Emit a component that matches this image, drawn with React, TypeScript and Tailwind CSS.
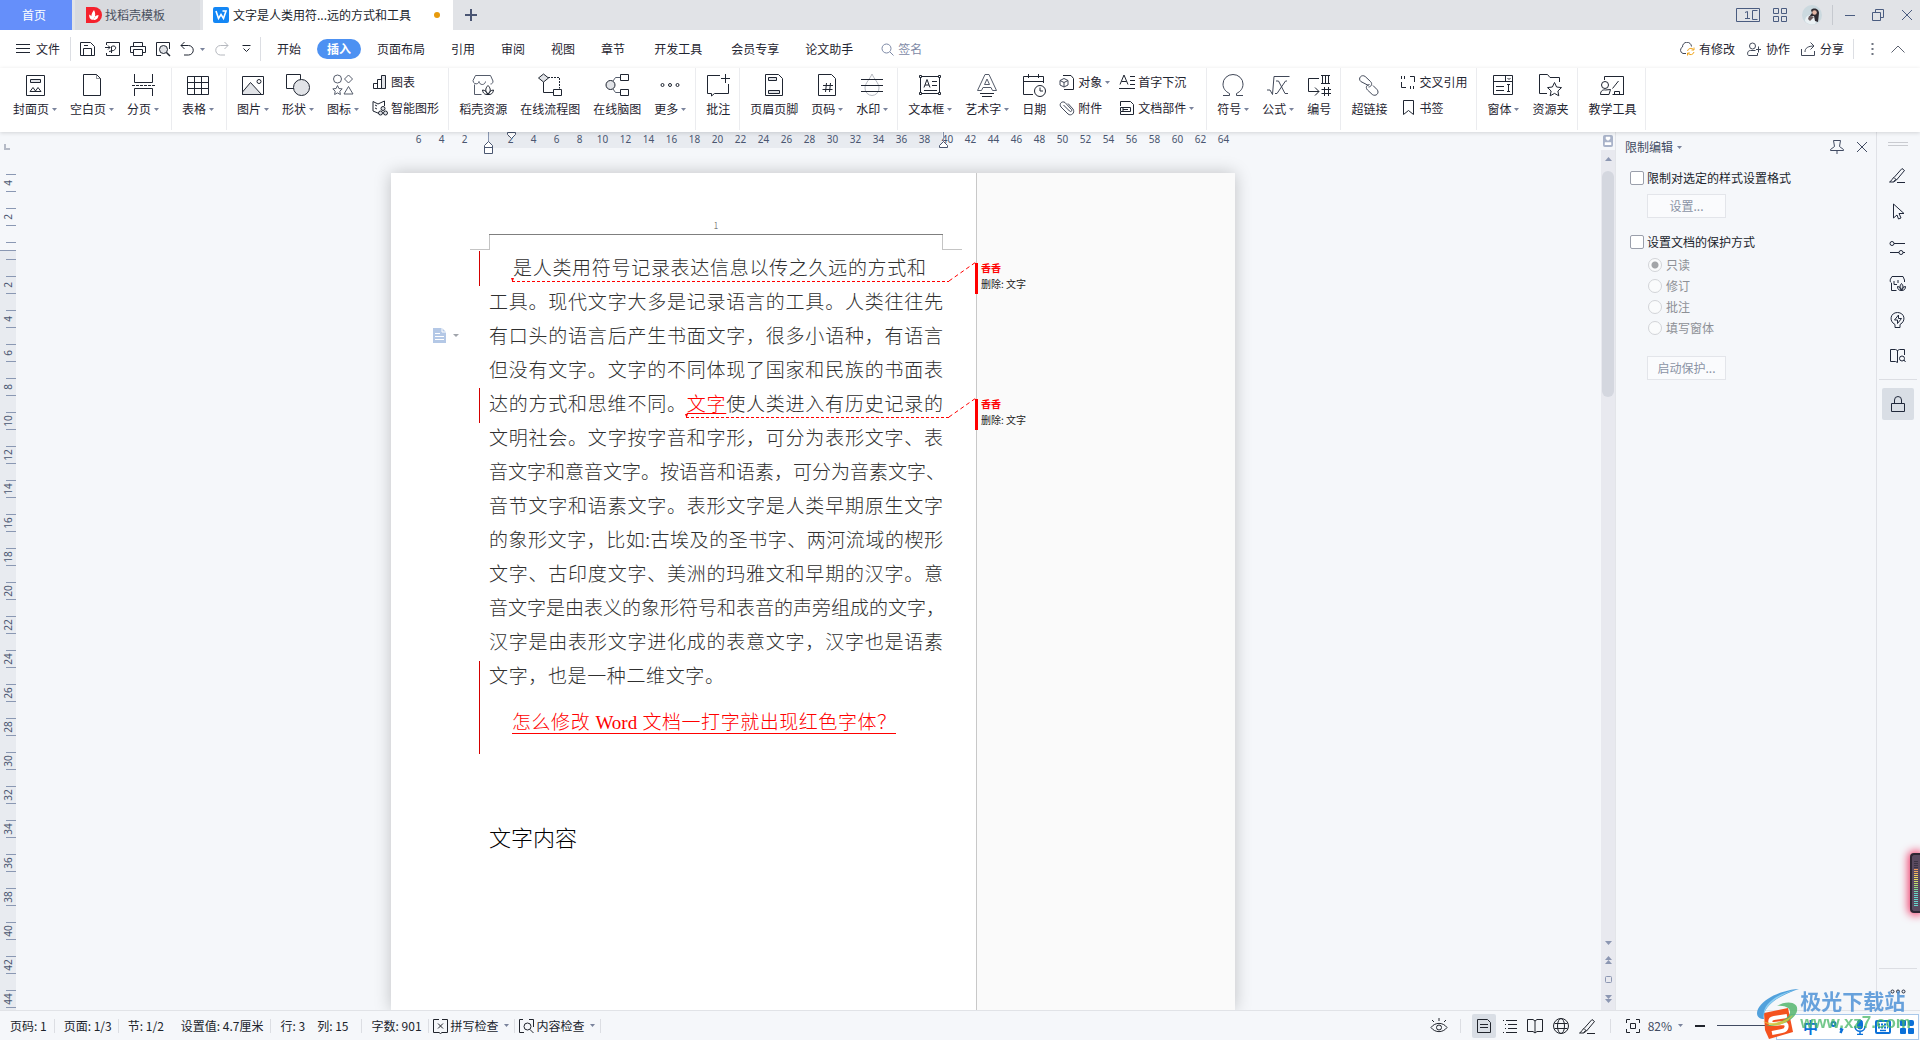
import { useState } from 'react';
import type { ReactNode } from 'react';
import clsx from 'clsx';

interface IconProps {
  w?: number;
  h?: number;
  className?: string;
  children: ReactNode;
}

function Ico({ w = 24, h = 24, className, children }: IconProps) {
  return (
    <svg
      width={w}
      height={h}
      viewBox={`0 0 ${w} ${h}`}
      fill="none"
      stroke="currentColor"
      className={clsx('shrink-0', className)}
      aria-hidden="true"
    >
      {children}
    </svg>
  );
}

function Caret({ className }: { className?: string }) {
  return (
    <svg width="5" height="3" viewBox="0 0 5 3" fill="currentColor" className={clsx('shrink-0 text-[#7a839c]', className)}>
      <path d="M0 0h5L2.5 3z" />
    </svg>
  );
}

const grey = '#e1e3e7';

/* ribbon icons, 24px */
const coverIcon = (
  <Ico>
    <path d="M3.5 2.5h18v20h-18z" />
    <path d="M7.500 6.500h10v3h-10z" fill={grey} />
    <path d="M7 18.500l3-4 2.500 3.500 2.500-3.500 3 4z" />
  </Ico>
);
const blankIcon = <Ico><path d="M3.500 1.500h13l4 4v17h-17z" /><path d="M16.500 1.500v4h4" strokeOpacity=".5" /></Ico>;
const breakIcon = (
  <Ico>
    <path d="M3.500 1v8.500h18V1M3.500 23v-7.500h18V23" />
    <path d="M1 12.500h23" strokeDasharray="3 1" />
  </Ico>
);
const tableIcon = (
  <Ico>
    <path d="M1.500 3.500h21v18h-21zM1.500 9.500h21M1.500 15.500h21M8.500 3.500v18M15.500 3.500v18" />
  </Ico>
);
const imageIcon = (
  <Ico>
    <path d="M1.500 19l8-9.500 11 12H1.500z" fill={grey} />
    <path d="M1.500 3.500h21v18h-21z" />
    <circle cx="18" cy="8.500" r="2" />
  </Ico>
);
const shapesIcon = (
  <Ico>
    <path d="M.5 1.500h14v14H.5z" />
    <circle cx="15.500" cy="14.500" r="8" fill={grey} />
  </Ico>
);
const symbolsIcon = (
  <Ico>
    <g stroke="#555c6b">
      <circle cx="6.500" cy="6" r="4" />
      <path d="M17.500 2l4 4-4 4-4-4z" />
      <path d="M6.500 12.500l1.400 3 3.300.4-2.400 2.300.6 3.300-2.900-1.600-2.900 1.600.6-3.300-2.400-2.300 3.300-.4z" />
      <path d="M17.500 13.500l4.500 7.500h-9z" />
    </g>
  </Ico>
);
const storeIcon = (
  <Ico>
    <path d="M3.500 11.500v10h7M2 7.500L4.500 2.500h15L22 8c0 2-1 3-2.500 3M2 7.500c0 4 5.500 4.500 6 1 .5 4 6 4 6.500 0" stroke="#555c6b" />
    <path d="M17 21.500c-3-3-3-6 0-9 3 3 3 6 0 9zM17 21.500c-3 .3-5-1-5.500-4.500 2.500.2 4 1.500 5.500 4.500zM17 21.500c3 .3 5-1 5.500-4.500-2.500.2-4 1.500-5.500 4.500z" />
  </Ico>
);
const flowIcon = (
  <Ico>
    <path d="M5.500 9v10.500h10" />
    <path d="M10 4.500h11.500v11" strokeDasharray="2 1" />
    <path d="M5.500 1l5 4-5 4-5-4z" fill={grey} />
    <path d="M15.500 16.500h8v6h-8z" fill="#fff" />
  </Ico>
);
const mindIcon = (
  <Ico>
    <path d="M15.500 4.500h-5L8 8M15.500 19.500h-5L8 16" stroke="#555c6b" />
    <circle cx="5.500" cy="12" r="4.500" fill={grey} />
    <path d="M15.500 1.500h8v6h-8zM15.500 16.500h8v6h-8z" />
  </Ico>
);
const moreIcon = (
  <Ico>
    <circle cx="4.500" cy="12" r="1.500" />
    <circle cx="12" cy="12" r="1.500" />
    <circle cx="19.500" cy="12" r="1.500" />
  </Ico>
);
const commentIcon = <Ico><path d="M14 2.500H1.500v18h4V23l3-2.500h14V11M19.500 1v9M15 5.500h9" /></Ico>;
const headerFooterIcon = (
  <Ico>
    <path d="M3.500 1.500h13l4 4v17h-17z" />
    <path d="M6.500 4.500h8v3h-8zM6.500 17.500h11v3h-11z" fill={grey} />
  </Ico>
);
const pageNoIcon = (
  <Ico>
    <path d="M3.500 1.500h13l4 4v17h-17z" />
    <path d="M11.500 10l-1 9M15.500 10l-1 9M8 12.500h10M7.500 16.500h10" />
  </Ico>
);
const watermarkIcon = (
  <Ico>
    <path d="M12 1C10 6 5 10 5 15a7 7.500 0 0 0 14 0c0-5-5-9-7-14z" stroke="#b4b8c0" />
    <path d="M1 6.500h22M1 12.500h22M1 18.500h22" />
  </Ico>
);
const textBoxIcon = (
  <Ico>
    <path d="M2.500 3.500h19v17h-19zM6 14.500l3-8 3 8M7 12h4M14 8.500h5M14 12.500h5M6 17.500h13" />
    <path d="M1.500 2.500h2v2h-2zM20.500 2.500h2v2h-2zM1.500 19.500h2v2h-2zM20.500 19.500h2v2h-2z" fill="#fff" />
  </Ico>
);
const wordArtIcon = (
  <Ico>
    <path d="M10 1.500h4l7.500 16h-4l-1.500-3H8l-1.500 3h-4zM12 6l-2.500 5.500h5z" stroke="#555c6b" />
    <path d="M5 20.500h14M7 23.500h10" />
  </Ico>
);
const dateIcon = (
  <Ico>
    <path d="M21.500 10V3.500h-20v18H11M1.500 8.500h20M6.500 1v4M16.500 1v4" />
    <circle cx="18" cy="18" r="5.500" fill="#fff" />
    <path d="M18 14.500v3.500h3" />
  </Ico>
);
const omegaIcon = <Ico><path d="M2 22.500h6.500v-2C4.500 18.500 2 15.500 2 11a10 9.500 0 0 1 20 0c0 4.500-2.500 7.500-6.500 9.500v2H22" stroke="#414858" /></Ico>;
const formulaIcon = <Ico><path d="M1 17h3l2.500 4.500L8 3.500h15.500M10 8h2.500l6.500 12.500H22M21 8h-1.500L11 20.500H9" stroke="#414858" /></Ico>;
const numberingIcon = (
  <Ico>
    <path d="M12 5.500H1.500v13H12M8 14.500l4 4-4 4M14 2.500h9M14 10.500h9M15.500 2.500v8M18.500 2.500v8M21.500 2.500v8M17.500 14v9M21.500 14v9M14.500 16.500H24M14.500 20.500H24" />
  </Ico>
);
const linkIcon = (
  <Ico>
    <path d="M11.500 12.500L3.800 8.500C.5 5.500 4.500.8 8.200 3.500l5.300 5c2.500 2.500.5 5.500-2 5.500M12.500 11.500c-3.500.5-4 3.500-2 5.500l4.800 4.500c3.500 2.500 7.700-1.500 4.700-5l-4-4" stroke="#414858" />
  </Ico>
);
const formIcon = (
  <Ico>
    <path d="M2.500 2.500h19v19h-19zM2.500 8.500h19M14.500 2.500v6M5 13.500h8M5 17.500h8M17.500 11.500v7M16 11.500h3M16 18.500h3M16.500 5l1.500 1.500L19.500 5" />
  </Ico>
);
const folderIcon = (
  <Ico>
    <path d="M9 20.500H1.500v-19h8l2.500 3h9.500V9" />
    <path d="M16.500 9.500l2.100 4.500 4.900.6-3.600 3.400.9 4.800-4.300-2.400-4.300 2.400.9-4.800-3.600-3.400 4.900-.6z" fill="#fff" />
  </Ico>
);
const teachIcon = (
  <Ico>
    <path d="M4.500 7V3.500h19v18h1-12M18.500 8l-6 7.500" />
    <circle cx="5" cy="12" r="3.500" />
    <path d="M.5 21.500c0-4 2.500-5 5-4.500l5-.5-1.500 5zM14.500 21v-2.500h5V21" />
  </Ico>
);

/* small ribbon icons, 16px */
const chartIcon = <Ico w={16} h={16}><path d="M1.500 9.500h4v5h-4zM5.500 5.500h4v9h-4z" /><path d="M9.500 1.500h4v13h-4z" fill={grey} /></Ico>;
const smartIcon = (
  <Ico w={16} h={16}>
    <path d="M7 13.500L1 11V1.500l5 2.500 6.500-3V6M3 5l2 1M3 8l2 1" />
    <circle cx="11" cy="8.500" r="2" fill={grey} />
    <circle cx="8.500" cy="13" r="2" fill={grey} />
    <circle cx="13.500" cy="13" r="2" fill={grey} />
  </Ico>
);
const objectIcon = (
  <Ico w={16} h={16}>
    <path d="M4 1.500h8l2.500 3v11H5" />
    <path d="M5 4.500l4 2v4.500l-4 2-4-2V6.500zM1 6.500l4 2 4-2M5 8.500V13" stroke="#414858" />
  </Ico>
);
const clipIcon = <Ico w={16} h={16}><path d="M4.500 5l6 6c1.500 1.500 3-.5 2-1.500L6 2.500C3 .5-.5 4 2 7l7 7c3 2.500 7.500-1 5-5L9 3.500" stroke="#414858" /></Ico>;
const dropCapIcon = <Ico w={16} h={16}><path d="M1 10.500L5 1l4 9.500M2.500 7.500h5M11 2.500h5M11 6.500h5M11 10.500h5M0 14.500h16" /></Ico>;
const partsIcon = <Ico w={16} h={16}><path d="M1.500 6V1.500h10l3 3v10h-13V12M1.500 7.500h10v4h-10zM4 9.500h5M4 7v5" /></Ico>;
const crossRefIcon = (
  <Ico w={16} h={16}>
    <path d="M10 2.500h4.500V8M1.500 8v5.500H6M1.500 2v3M4.500 2v3M10.500 12v3M13.500 12v3" />
  </Ico>
);
const bookmarkIcon = <Ico w={16} h={16}><path d="M3.500 0.500h10v14l-5-4-5 4z" /></Ico>;

interface RibbonEntry {
  label: string;
  icon: ReactNode;
  menu?: boolean;
}

interface RibbonGroup {
  items: RibbonEntry[];
  small?: RibbonEntry[][];
  wide?: boolean;
}

const ribbon: RibbonGroup[] = [
  {
    wide: true,
    items: [
      { label: '封面页', icon: coverIcon, menu: true },
      { label: '空白页', icon: blankIcon, menu: true },
      { label: '分页', icon: breakIcon, menu: true },
    ],
  },
  { wide: true, items: [{ label: '表格', icon: tableIcon, menu: true }] },
  {
    items: [
      { label: '图片', icon: imageIcon, menu: true },
      { label: '形状', icon: shapesIcon, menu: true },
      { label: '图标', icon: symbolsIcon, menu: true },
    ],
    small: [[{ label: '图表', icon: chartIcon }, { label: '智能图形', icon: smartIcon }]],
  },
  {
    items: [
      { label: '稻壳资源', icon: storeIcon },
      { label: '在线流程图', icon: flowIcon },
      { label: '在线脑图', icon: mindIcon },
      { label: '更多', icon: moreIcon, menu: true },
    ],
  },
  { items: [{ label: '批注', icon: commentIcon }] },
  {
    items: [
      { label: '页眉页脚', icon: headerFooterIcon },
      { label: '页码', icon: pageNoIcon, menu: true },
      { label: '水印', icon: watermarkIcon, menu: true },
    ],
  },
  {
    wide: true,
    items: [
      { label: '文本框', icon: textBoxIcon, menu: true },
      { label: '艺术字', icon: wordArtIcon, menu: true },
      { label: '日期', icon: dateIcon },
    ],
    small: [
      [{ label: '对象', icon: objectIcon, menu: true }, { label: '附件', icon: clipIcon }],
      [{ label: '首字下沉', icon: dropCapIcon }, { label: '文档部件', icon: partsIcon, menu: true }],
    ],
  },
  {
    items: [
      { label: '符号', icon: omegaIcon, menu: true },
      { label: '公式', icon: formulaIcon, menu: true },
      { label: '编号', icon: numberingIcon },
    ],
  },
  {
    items: [{ label: '超链接', icon: linkIcon }],
    small: [[{ label: '交叉引用', icon: crossRefIcon }, { label: '书签', icon: bookmarkIcon }]],
  },
  {
    items: [
      { label: '窗体', icon: formIcon, menu: true },
      { label: '资源夹', icon: folderIcon },
    ],
  },
  { items: [{ label: '教学工具', icon: teachIcon }] },
];

const menus = ['开始', '插入', '页面布局', '引用', '审阅', '视图', '章节', '开发工具', '会员专享', '论文助手'];

const lines = [
  '工具。现代文字大多是记录语言的工具。人类往往先',
  '有口头的语言后产生书面文字，很多小语种，有语言',
  '但没有文字。文字的不同体现了国家和民族的书面表',
];

const moreLines = [
  '文明社会。文字按字音和字形，可分为表形文字、表',
  '音文字和意音文字。按语音和语素，可分为音素文字、',
  '音节文字和语素文字。表形文字是人类早期原生文字',
  '的象形文字，比如:古埃及的圣书字、两河流域的楔形',
  '文字、古印度文字、美洲的玛雅文和早期的汉字。意',
  '音文字是由表义的象形符号和表音的声旁组成的文字，',
  '汉字是由表形文字进化成的表意文字，汉字也是语素',
];

function TitleBar() {
  return (
    <header className="flex h-[30px] shrink-0 bg-[#e1e3e7] text-[12px]">
      <button className="w-[72px] bg-[#658ffa] pr-1 text-white">首页</button>
      <button className="ml-[3px] flex w-[125px] items-center gap-[3px] bg-[#d8dade] pl-[11px] text-[#4a5160]">
        <svg width="16" height="16" viewBox="0 0 16 16" className="shrink-0">
          <path d="M0 0h8a8 8 0 0 1 0 16H0z" fill="#f5222d" />
          <path d="M7 13C4.500 10 5 7 8 3c2 4 1.500 7-1 10zM6.500 13C4 12.500 3 10.500 3.200 7.500 5.500 8.500 6.500 10.500 6.500 13zM7.500 13c3 0 5-2 5-5-3 .5-4.800 2-5 5z" fill="#fff" />
        </svg>
        找稻壳模板
      </button>
      <button className="ml-[3px] flex w-[250px] items-center bg-white pl-[10px] pr-[13px] text-[#20242c]">
        <svg width="16" height="16" viewBox="0 0 16 16" className="mr-1 shrink-0">
          <rect width="16" height="16" rx="2" fill="#1487f5" />
          <path d="M3 4l2.500 7.500L8 7.500l2.500 4L13 4H9.500" fill="none" stroke="#fff" strokeWidth="1.600" />
        </svg>
        文字是人类用符...远的方式和工具
        <span className="ml-auto h-[6px] w-[6px] rounded-full bg-[#e79a0c]" />
      </button>
      <button className="ml-[10px] w-4 text-[#4a5573]" aria-label="新建标签">
        <Ico w={16} h={16}><path d="M2 8h12M8 2v12" strokeWidth="2" /></Ico>
      </button>
      <div className="ml-auto flex items-center pr-2 text-[#4a5c80]">
        <button aria-label="窗口布局">
          <Ico w={24} h={16}>
            <path d="M.5 1.500h23v13H.5zM21.500 3.500h-5v9h5M18.500 12.500h2" />
            <path d="M9 5.500l2.500-1v7.500M9 11.500h5" />
          </Ico>
        </button>
        <button className="ml-[13px]" aria-label="应用">
          <Ico w={14} h={14}><path d="M.5.5h5v5h-5zM8.500.5h5v5h-5zM.5 8.500h5v5h-5zM8.500 8.500h5v5h-5z" /></Ico>
        </button>
        <svg width="20" height="20" viewBox="0 0 20 20" className="ml-[15px]">
          <circle cx="10" cy="10" r="10" fill="#cbd9df" />
          <path d="M3 16c0-4 3-6 6-6l7 3-3 6c-4 1-8 0-10-3z" fill="#eaf1f4" />
          <path d="M9 5c3-3 8-1 8 3l-1 9-3-1-1-5-5 1 3-4z" fill="#2e2a30" />
          <circle cx="12.500" cy="7.500" r="2.300" fill="#e3b7a6" />
          <path d="M7 11l5 1-4 4-2-2z" fill="#6a5a5c" />
        </svg>
        <span className="ml-[10px] h-5 w-px bg-[#c6c9cf]" />
        <button className="ml-3" aria-label="最小化"><Ico w={10} h={12}><path d="M0 6.500h10" /></Ico></button>
        <button className="ml-[17px]" aria-label="还原"><Ico w={12} h={12}><path d="M.5 3.500h8v8h-8zM3.500 3V.5h8v8H9" /></Ico></button>
        <button className="ml-[18px]" aria-label="关闭"><Ico w={10} h={10}><path d="M0 0l10 10M10 0L0 10" /></Ico></button>
      </div>
    </header>
  );
}

function MenuBar() {
  const [active, setActive] = useState('插入');
  return (
    <div className="flex h-[38px] shrink-0 items-center bg-white pl-4 pr-[15px] text-[12px] text-[#1f2531]">
      <button className="flex items-center gap-[6px]">
        <Ico w={14} h={12}><path d="M0 1.500h14M0 5.500h14M0 9.500h14" /></Ico>
        文件
      </button>
      <span className="ml-[10px] h-6 w-px bg-[#dcdee3]" />
      <div className="ml-[9px] flex items-center gap-[9px]">
        <button aria-label="保存"><Ico w={16} h={16}><path d="M.5 14.500V1.500h10l4 4v9zM3.500 14v-6.500h8V14M4 4.500h4" /></Ico></button>
        <button aria-label="输出为PDF"><Ico w={16} h={16}><path d="M1.500 4V1.500h13v13h-13V12M0 6.500h5M3 4.500l2 2-2 2M6.500 12V5.500c4-2 6 2 2 4L4 10.500" /></Ico></button>
        <button aria-label="打印"><Ico w={16} h={16}><path d="M3.500 5V1.500h9V5M3 11.500H.5v-6h15v6H13M3.500 8.500h9v6h-9z" /></Ico></button>
        <button aria-label="打印预览"><Ico w={16} h={16}><path d="M6 14.500H1.500v-13h13V8" /><circle cx="8.500" cy="8.500" r="4" fill={grey} /><path d="M11.500 11.500l3.500 3.500" strokeWidth="1.500" /></Ico></button>
        <button aria-label="撤销"><Ico w={14} h={16}><path d="M4.500 1L1 4.500 4.500 8M1 4.500h7.500a4.500 4.500 0 0 1 0 9.500H4" /></Ico></button>
        <Caret className="-ml-[3px]" />
        <button aria-label="恢复" className="ml-[1px] text-[#b5b8be]"><Ico w={14} h={16}><path d="M9.500 1L13 4.500 9.500 8M13 4.500H5.500a4.500 4.500 0 0 0 0 9.500H10" /></Ico></button>
        <button aria-label="更多命令" className="ml-[4px]"><Ico w={9} h={10}><path d="M.5 1.500h8M1.500 4.500l3 3 3-3" /></Ico></button>
      </div>
      <span className="ml-[9px] h-6 w-px bg-[#dcdee3]" />
      <nav className="ml-[3px] flex items-center">
        {menus.map((m) => (
          <button
            key={m}
            onClick={() => setActive(m)}
            className={clsx(
              'h-5 whitespace-nowrap',
              m === active ? 'mx-[3px] rounded-full bg-[#4d91f2] px-[10px] font-bold text-white' : 'px-[13px]',
              m === '开发工具' && 'mx-[3px]'
            )}
          >
            {m}
          </button>
        ))}
      </nav>
      <button className="ml-[15px] flex items-center gap-1 text-[#7d89a6]">
        <Ico w={13} h={13}><circle cx="5.500" cy="5.500" r="4.500" /><path d="M9 9l3.500 3.500" /></Ico>
        签名
      </button>
      <div className="ml-auto flex items-center">
        <button className="flex items-center gap-1">
          <Ico w={16} h={14}>
            <path d="M7 11.500H4a3.500 3.500 0 0 1-.5-6.500 4.500 4.500 0 0 1 9-.5" stroke="#414858" />
            <path d="M8.500 9a3.500 3.500 0 0 1 6-1.500M15 5.500v2.500h-2.500M15 10a3.500 3.500 0 0 1-6 1.500M8.500 13.500V11H11" stroke="#f0a51d" />
          </Ico>
          有修改
        </button>
        <button className="ml-3 flex items-center gap-[5px]">
          <Ico w={14} h={14} className="text-[#414858]"><circle cx="5.500" cy="4" r="3" /><path d="M8.500 8.500H3.500c-4 0-3 5-2 5h9V11M11.500 4.500v6M9 7.500h5" /></Ico>
          协作
        </button>
        <button className="ml-[11px] flex items-center gap-[5px]">
          <Ico w={14} h={14} className="text-[#414858]"><path d="M.5 7v6.500h13V9M4 10c0-4 3-6 9-6M9.500.5L13 4 9.500 7.500" /></Ico>
          分享
        </button>
        <span className="ml-[9px] h-5 w-px bg-[#dcdee3]" />
        <button className="ml-[17px]" aria-label="更多"><Ico w={3} h={12}><path d="M1.500 0v12" strokeWidth="2" strokeDasharray="2 3" stroke="#6f7480" /></Ico></button>
        <button className="ml-[17px]" aria-label="收起功能区"><Ico w={14} h={8}><path d="M.5 7.500L7 1l6.500 6.500" stroke="#5c6270" /></Ico></button>
      </div>
    </div>
  );
}

function Ribbon() {
  return (
    <div className="relative z-10 flex h-16 shrink-0 bg-white pb-[2px] pl-[3px] text-[12px] leading-4 text-[#1f2531] shadow-[0_1px_4px_rgba(0,0,0,0.14)]">
      {ribbon.map((group, i) => (
        <div
          key={i}
          className={clsx('flex gap-[13px] whitespace-nowrap border-r border-[#ebecef] pl-[10px] pt-[5px]', group.wide ? 'pr-3' : 'pr-[9px]')}
        >
          {group.items.map(({ label, icon, menu }) => (
            <button key={label} className="flex flex-col items-center gap-1 self-start">
              {icon}
              <span className="flex items-center gap-[3px]">
                {label}
                {menu && <Caret />}
              </span>
            </button>
          ))}
          {group.small && (
            <div className="flex gap-[9px] pt-[1px]">
              {group.small.map((col, c) => (
                <div key={c} className="flex flex-col items-start gap-[10px]">
                  {col.map(({ label, icon, menu }) => (
                    <button key={label} className="flex items-center gap-[3px]">
                      {icon}
                      {label}
                      {menu && <Caret />}
                    </button>
                  ))}
                </div>
              ))}
            </div>
          )}
        </div>
      ))}
    </div>
  );
}

function RulerCell({ value }: { value: number }) {
  return (
    <div className="flex h-[34px] shrink-0 items-center">
      <span className="flex h-full w-[6px] items-center justify-center">
        <span className="ml-[10px] -rotate-90 text-[10px] leading-none">{value}</span>
      </span>
      <span className="h-[18px] w-[10px] border-y border-[#8a98b3]" />
    </div>
  );
}

function VerticalRuler() {
  const marks = Array.from({ length: 22 }, (_, i) => (i + 1) * 2);
  return (
    <div className="flex w-4 shrink-0 flex-col overflow-hidden font-['Noto_Sans',sans-serif] text-[#4a5670]">
      <div className="h-[34px] shrink-0 pl-1 pt-3">
        <div className="h-[6px] w-[6px] border-b-2 border-l-2 border-[#b5bac6]" />
      </div>
      <RulerCell value={4} />
      <RulerCell value={2} />
      <div className="h-[17px] shrink-0 border-b border-[#8a98b3] pl-[6px] pt-2">
        <div className="h-px bg-[#8a98b3]" />
      </div>
      <div className="grow bg-[#e8ebf0]">
        <div className="h-[17px] pl-[6px] pt-2">
          <div className="h-px bg-[#8a98b3]" />
        </div>
        {marks.map((m) => (
          <RulerCell key={m} value={m} />
        ))}
      </div>
    </div>
  );
}

function HorizontalRuler() {
  const marks = Array.from({ length: 36 }, (_, i) => Math.abs(i - 3) * 2);
  return (
    <div className="relative flex h-4 shrink-0 bg-[linear-gradient(to_right,transparent_97px,#e8ebf0_97px,#e8ebf0_551px,transparent_551px)] pl-4 font-['Noto_Sans',sans-serif] text-[10px] leading-[14px] text-[#4a5670]">
      {marks.map((m, i) => (
        <span key={i} className="w-[23px] shrink-0 text-center">{m === 0 ? '' : m}</span>
      ))}
      <svg width="480" height="24" viewBox="0 0 480 24" fill="#fff" stroke="#4a5670" className="absolute left-[90px] top-0">
        <path d="M7.500 0v10M462.500 0v10" stroke="#8a98b3" />
        <path d="M3.500 21.500v-8l4-4 4 4v8zM3.500 15.500h8" />
        <path d="M26.500.5h8v2l-4 4-4-4z" />
        <path d="M458.500 15.500v-2l4-4 4 4v2z" />
      </svg>
    </div>
  );
}

function Justified({ children, className }: { children: ReactNode; className?: string }) {
  return <span className={clsx('block h-[34px] whitespace-nowrap text-justify [text-align-last:justify]', className)}>{children}</span>;
}

function Balloon() {
  return (
    <div className="-ml-[2px] h-[31px] border-l-[3px] border-[#f00] pl-[3px] text-[10px] leading-[10px]">
      <p className="font-bold text-[#f00]">香香</p>
      <p className="mt-[6px] text-[#222]">删除: 文字</p>
    </div>
  );
}

function Page() {
  return (
    <div className="relative mt-[25px] flex grow bg-white shadow-[0_0_16px_rgba(0,0,0,0.22)]">
      <article className="w-[585px] pl-[98px] pr-[33px] text-[19px] font-light leading-[34px] text-[#303030]">
        <div className="flex h-[62px] items-end justify-center border-b border-[#7f7f7f] pb-[1px] text-[9px] leading-[14px] text-[#555]">1</div>
        <div className="-mx-[19px] grid h-[15px] grid-cols-[19px_1fr_19px]">
          <span className="border-b border-[#c4c4c4]" />
          <span className="border-x border-[#c4c4c4]" />
          <span className="border-b border-[#c4c4c4]" />
        </div>
        <p>
          <Justified className="pl-[24px] pr-[17px]">是人类用符号记录表达信息以传之久远的方式和</Justified>
          {lines.map((l) => <Justified key={l}>{l}</Justified>)}
          <Justified>
            达的方式和思维不同。<ins className="text-[#f00] underline underline-offset-2">文字</ins>使人类进入有历史记录的
          </Justified>
          {moreLines.map((l) => <Justified key={l}>{l}</Justified>)}
          <Justified className="w-[235px]">文字，也是一种二维文字。</Justified>
        </p>
        <p className="mt-[14px] flex h-[34px] items-center pl-[23px]">
          <ins className="block w-[384px] whitespace-nowrap border-b border-[#f00] font-['Liberation_Serif','Noto_Sans_CJK_SC',serif] leading-5 text-[#f00] no-underline [text-align-last:justify]">
            怎么修改 Word 文档一打字就出现红色字体？
          </ins>
        </p>
        <p className="mt-[79px] text-[22px] text-black">文字内容</p>
      </article>
      <aside className="flex grow flex-col gap-[105px] border-l border-[#c8c8c8] bg-[#fafafa] pt-[90px]">
        <Balloon />
        <Balloon />
      </aside>
      {/* change bars and balloon connectors */}
      <svg width="600" height="600" viewBox="0 0 600 600" fill="none" stroke="#f00" className="pointer-events-none absolute left-0 top-0">
        <path d="M88.500 78v35M88.500 215v35M88.500 488v93" stroke="#d40000" />
        <path d="M121 108.500h437M295 244.500h263" strokeDasharray="3 2" />
        <path d="M558 108l27-19M558 244l27-19" strokeDasharray="4 3" />
        <path d="M120 105h3l-1.500 4zM294 241h3l-1.500 4z" fill="#f00" stroke="none" />
        <g stroke="none">
          <path d="M42 155h9l4 4v11H42z" fill="#b4c8e6" />
          <path d="M51 155v4h4M44 160.500h5M44 163.500h9M44 166.500h9" stroke="#fff" />
          <path d="M62 161h6l-3 3z" fill="#a0a4ab" />
        </g>
      </svg>
    </div>
  );
}

function ScrollBar() {
  return (
    <div className="flex w-[14px] shrink-0 flex-col items-center bg-[#e8e9ef] text-[#8c97b2]">
      <div className="flex h-[18px] w-full items-center justify-center bg-[#f5f7fa]">
        <Ico w={10} h={12}><rect x=".5" y=".5" width="9" height="11" rx="1" fill="#a9b3c9" stroke="#a9b3c9" /><path d="M3 2h4v2L5 5.500 3 4zM2 10V7.500h6V10M4 8v2M6 8v2" fill="#fff" stroke="#fff" strokeWidth=".5" /></Ico>
      </div>
      <Ico w={7} h={4} className="mt-[7px]"><path d="M0 4h7L3.500 0z" fill="currentColor" stroke="none" /></Ico>
      <div className="mt-[10px] h-[226px] w-3 rounded-full bg-[#d4d7df]" />
      <div className="mb-[7px] mt-auto flex flex-col items-center">
        <Ico w={7} h={4}><path d="M0 0h7L3.500 4z" fill="currentColor" stroke="none" /></Ico>
        <Ico w={7} h={8} className="mt-[11px]"><path d="M0 4h7L3.500 0zM0 8h7L3.500 4z" fill="currentColor" stroke="none" /></Ico>
        <Ico w={7} h={7} className="mt-[12px]"><rect x=".5" y=".5" width="6" height="6" rx="1" /></Ico>
        <Ico w={7} h={8} className="mt-[12px]"><path d="M0 0h7L3.500 4zM0 4h7L3.500 8z" fill="currentColor" stroke="none" /></Ico>
      </div>
    </div>
  );
}

function RestrictPanel() {
  const box = 'h-[14px] w-[14px] shrink-0 appearance-none rounded-[2px] border border-[#9a9fab] bg-white';
  const button = 'h-6 w-[79px] border border-[#e3e5ea] bg-[#fafbfd] text-[#8b93a5]';
  return (
    <section className="w-[261px] shrink-0 border-l border-[#e3e5e9] text-[12px] leading-4 text-[#20242c]">
      <div className="flex h-[30px] items-center pl-[9px] pr-[9px] text-[#414b62]">
        <h2>限制编辑</h2>
        <Caret className="ml-1" />
        <button className="ml-auto" aria-label="固定"><Ico w={14} h={14}><path d="M3.500.5h7l-1 6 4 3v1H.5v-1l4-3-1-6M7 10.500V14" /></Ico></button>
        <button className="ml-[13px]" aria-label="关闭面板"><Ico w={10} h={10}><path d="M0 0l10 10M10 0L0 10" /></Ico></button>
      </div>
      <label className="ml-[14px] mt-2 flex items-center gap-[3px]">
        <input type="checkbox" className={box} />
        限制对选定的样式设置格式
      </label>
      <button className={clsx('ml-[31px] mt-2 block', button)}>设置...</button>
      <label className="ml-[14px] mt-4 flex items-center gap-[3px]">
        <input type="checkbox" className={box} />
        设置文档的保护方式
      </label>
      <div className="ml-[32px] mt-[7px] flex flex-col gap-[5px] text-[#8d9096]">
        {['只读', '修订', '批注', '填写窗体'].map((opt) => (
          <label key={opt} className="flex items-center gap-1">
            <input
              type="radio"
              name="protect"
              defaultChecked={opt === '只读'}
              disabled
              className="h-[14px] w-[14px] appearance-none rounded-full border border-[#d2d4d8] bg-[#fafbfc] checked:bg-[radial-gradient(circle,#a3a5a8_3px,#fafbfc_4px)]"
            />
            {opt}
          </label>
        ))}
      </div>
      <button className={clsx('ml-[31px] mt-5 block', button)}>启动保护...</button>
    </section>
  );
}

const penPath = 'M5 10.500L13 1.500l2.500 2L7.500 13zM5 10.500c-2 .5-1.500 3-4.500 4.500h4l3-2M8 15.500h8M4.500 15l2-2.500';

const railTools = [
  { label: '样式和格式', icon: <path d={penPath} /> },
  { label: '选择', icon: <path d="M4.500 1v14l3.500-3 1.500 4 2.500-1-2-4.500h5z" /> },
  { label: '属性', icon: <><circle cx="3" cy="4.500" r="2" /><path d="M5 4.500h11M1 13.500h9M14 13.500h2" /><circle cx="12" cy="13.500" r="2" /></> },
  { label: '稻壳', icon: <><path d="M2.500 8v7.500h5M2 7.500C1 7 1 5 1.500 4L3 1.500h11L15.500 5v2M5 6v3.500h3M9 5v3" /><path d="M12.500 15.500c-2-2-2-5 0-7 2 2 2 5 0 7zM12.500 15.500c-2.500 0-4-1-4-4 2 0 3.500 1.500 4 4zM12.500 15.500c2.500 0 4-1 4-4-2 0-3.500 1.500-4 4z" fill={grey} /></> },
  { label: '灵感', icon: <><path d="M6 13.500C-.5 10 1.500 1.500 8.500 1.500s9 8.500 2.500 12v3H6z" /><path d="M9.500 4l-4 5h3v3.500l4-5h-3z" /></> },
  { label: '阅读', icon: <><path d="M8.500 15.500V3.500l-2-1h-5v12h5zM8.500 3.500l2-1h5V8" /><circle cx="13" cy="11.500" r="2.500" /><path d="M15 13l1.500 2" /></> },
];

function Rail() {
  return (
    <aside className="flex w-[44px] shrink-0 flex-col items-center border-l border-[#e0e2e7] pr-[2px] text-[#20283a]">
      <div className="mt-[10px] h-[4px] w-5 shrink-0 border-y border-[#c9cbd0]" />
      <div className="mt-[21px] flex flex-col gap-[18px]">
        {railTools.map((t) => (
          <button key={t.label} aria-label={t.label} className="h-[18px]">
            <Ico w={18} h={18}>{t.icon}</Ico>
          </button>
        ))}
      </div>
      <div className="mt-[14px] h-px w-[38px] bg-[#dcdee3]" />
      <button aria-label="限制编辑" className="mt-2 flex h-8 w-8 items-center justify-center rounded-[2px] bg-[#d9dee5]">
        <Ico w={18} h={18}><path d="M2.500 8.500h13v8h-13zM5.500 8V5a3.500 3.500 0 0 1 7 0v3" /></Ico>
      </button>
      <div className="mb-4 mt-auto flex flex-col items-center">
        <div className="h-px w-[38px] bg-[#dcdee3]" />
        <button aria-label="更多工具" className="mt-[20px]">
          <Ico w={16} h={5}><circle cx="2.500" cy="2.500" r="1.500" /><circle cx="8" cy="2.500" r="1.500" /><circle cx="13.500" cy="2.500" r="1.500" /></Ico>
        </button>
      </div>
    </aside>
  );
}

function Sep({ className }: { className?: string }) {
  return <span className={clsx('h-[14px] w-px shrink-0 bg-[#dcdee3]', className)} />;
}

function StatusBar() {
  return (
    <footer className="flex h-[30px] shrink-0 items-center whitespace-nowrap border-t border-[#e1e3e7] bg-[#f5f7fa] pl-[10px] text-[12px] text-[#20242c]">
      <span>页码: 1</span>
      <Sep className="ml-[7px] mr-[9px]" />
      <span>页面: 1/3</span>
      <Sep className="ml-[6px] mr-[9px]" />
      <span>节: 1/2</span>
      <span className="ml-[17px]">设置值: 4.7厘米</span>
      <Sep className="ml-[6px] mr-[10px]" />
      <span>行: 3</span>
      <span className="ml-[12px]">列: 15</span>
      <Sep className="ml-[12px] mr-[10px]" />
      <span>字数: 901</span>
      <Sep className="ml-[6px] mr-1" />
      <button className="flex items-center gap-[3px]">
        <Ico w={15} h={16}><path d="M6 1.500H.5v13H6l1.500 1 1.500-1h5.500v-13H9M5 5.500l5 5M10 5.500l-5 5" /></Ico>
        拼写检查
        <Caret className="ml-[2px]" />
      </button>
      <Sep className="ml-[5px] mr-1" />
      <button className="flex items-center gap-[3px]">
        <Ico w={15} h={16}><path d="M4 1.500H.5v13H5M10 1.500h4.500V9" /><circle cx="8.500" cy="8.500" r="3.500" /><path d="M11 11.500l3.500 3.500" /></Ico>
        内容检查
        <Caret className="ml-[2px]" />
      </button>
      <Sep className="ml-[5px]" />
      <div className="ml-auto flex items-center pr-[122px]">
        <button aria-label="护眼模式"><Ico w={18} h={18}><path d="M1 10.500c4-5.500 12-5.500 16 0-4 5.500-12 5.500-16 0zM9 4V1M4 5L2 3M14 5l2-2" /><circle cx="9" cy="10.500" r="2.500" /></Ico></button>
        <Sep className="ml-3 mr-[11px]" />
        <button aria-label="页面视图" className="flex h-6 w-6 items-center justify-center rounded-[2px] bg-[#d9dee5]">
          <Ico w={16} h={16}><path d="M1.500 1.500h10l3 3v10h-13zM4 6.500h8M4 9.500h8" /></Ico>
        </button>
        <button aria-label="大纲" className="ml-[6px]"><Ico w={16} h={16}><path d="M1 2.500h1M4 2.500h11M3 6.500h1M6 6.500h9M3 10.500h1M6 10.500h9M1 14.500h1M4 14.500h11" /></Ico></button>
        <button aria-label="阅读版式" className="ml-[9px]"><Ico w={16} h={16}><path d="M8 15V3M6 1.500H.5v12h5.500l2 1.500 2-1.500h5.500v-12H10L8 3 6 1.500" /></Ico></button>
        <button aria-label="Web版式" className="ml-[10px]"><Ico w={16} h={16}><circle cx="8" cy="8" r="7.500" /><ellipse cx="8" cy="8" rx="3.500" ry="7.500" /><path d="M1.500 5.500h13M1.500 10.500h13" /></Ico></button>
        <button aria-label="写作模式" className="ml-[10px]"><Ico w={17} h={16}><path d={penPath} /></Ico></button>
        <Sep className="ml-[14px] mr-[15px]" />
        <button aria-label="适应窗口"><Ico w={14} h={14}><path d="M.5 4V.5H4M10 .5h3.500V4M13.500 10v3.500H10M4 13.500H.5V10M4.500 4.500h5v5h-5z" /></Ico></button>
        <button className="ml-2 flex items-center gap-[6px] text-[#414b62]">82%<Caret /></button>
        <button aria-label="缩小" className="ml-[12px] h-[2px] w-[10px] bg-[#20242c]" />
        <input type="range" aria-label="显示比例" defaultValue={50} className="ml-3 h-px w-[81px] appearance-none bg-[#414b62] [&::-webkit-slider-thumb]:h-0 [&::-webkit-slider-thumb]:w-0 [&::-webkit-slider-thumb]:appearance-none" />
      </div>
    </footer>
  );
}

const meter = [
  'bg-[#3c3444]', 'bg-[#3c3444]', 'bg-[#3c3444]', 'bg-[#3c3444]', 'bg-[#f09a5c]', 'bg-[#f0a95c]', 'bg-[#f0bb5c]',
  'bg-[#f0cf5c]', 'bg-[#e8dc60]', 'bg-[#e8dc60]', 'bg-[#d2e066]', 'bg-[#bfe06c]', 'bg-[#a8e074]', 'bg-[#94de80]',
  'bg-[#80dc94]', 'bg-[#72dcae]', 'bg-[#66d8c4]', 'bg-[#66d8cc]', 'bg-[#66d8cc]', 'bg-[#66d8cc]', 'bg-[#66d8cc]',
  'bg-[#66d8cc]', 'bg-[#66d8cc]',
];

function Overlays() {
  return (
    <>
      <div className="fixed right-0 top-[853px] z-20 flex h-[60px] w-[10px] flex-col items-end justify-center gap-px rounded-l-[4px] border-2 border-r-0 border-[#2e2633] bg-[#5a4a60] pr-[2px] shadow-[0_0_8px_2px_#f2406d]">
        {meter.map((c, i) => (
          <span key={i} className={clsx('h-[1px] w-1', c)} />
        ))}
      </div>

      {/* input method bar */}
      <div className="fixed bottom-0 right-[1px] z-20 flex h-[26px] items-center gap-[9px] border border-[#a9c8ea] bg-white pl-[26px] pr-1 text-[#0b70d8]">
        <span className="w-[17px] text-[15px] font-bold leading-5">中</span>
        <Ico w={16} h={16}><circle cx="4.500" cy="5" r="2" strokeWidth="2" /><path d="M11 9.500l2 1-1.500 3.500" strokeWidth="2.500" /></Ico>
        <Ico w={12} h={16}><rect x="3.500" y="1" width="5" height="9" rx="2.500" fill="currentColor" /><path d="M1 7c0 7 10 7 10 0M6 12v3M3 15.500h6" strokeWidth="1.500" /></Ico>
        <Ico w={16} h={14}><rect x="1" y="1" width="14" height="12" rx="1" strokeWidth="2" /><path d="M3 4.500h10M3 7.500h10" strokeDasharray="2 1" strokeWidth="2" /><path d="M5 10.500h6" strokeWidth="1.500" /></Ico>
        <Ico w={14} h={14}><g fill="currentColor" stroke="none"><rect width="6" height="6" rx="1" /><rect x="8" width="6" height="6" rx="2" /><rect y="8" width="6" height="6" rx="1" /><rect x="8" y="8" width="6" height="6" rx="1" /></g></Ico>
      </div>

      {/* site mark */}
      <div className="pointer-events-none fixed bottom-0 right-[9px] z-30 flex h-[52px] items-start gap-[1px]">
        <svg width="42" height="52" viewBox="0 0 42 52">
          <path d="M7 25l24-5 5 24-24 7-4-9z" fill="#f4511e" />
          <path d="M30 28l-13 2c-5 1-5 6 0 6l9-1c5 0 5 7-1 8l-10 2" fill="none" stroke="#fff" strokeWidth="4" />
          <path d="M42 1C21 2 1 14 0 25c0 4 3 6 7 6C5 21 17 9 42 1z" fill="#3f97d8" fillOpacity=".9" />
          <path d="M37 2C21 8 7 18 7 28 5 18 17 7 37 2z" fill="#8fd0f2" />
          <path d="M20 18c10-6 22-4 20 5-2 8-14 16-32 15 14-2 24-8 25-13 1-5-5-8-13-7z" fill="#54b56d" fillOpacity=".85" />
          <path d="M6 33c8 4 20 2 30-6-6 9-20 15-30 6z" fill="#e2c83a" fillOpacity=".8" />
        </svg>
        <div className="font-bold">
          <p className="text-[21px] leading-[25px] text-[#4d92d6]/85">极光下载站</p>
          <p className="font-['Liberation_Sans',sans-serif] text-[17px] leading-[19px] text-[#46b565]/75">www.xz7.com</p>
        </div>
      </div>
    </>
  );
}

export default function App() {
  return (
    <div className="flex h-screen min-w-[1680px] flex-col overflow-hidden bg-[#f5f7fa] font-['Noto_Sans_CJK_SC',sans-serif]">
      <TitleBar />
      <MenuBar />
      <Ribbon />
      <main className="flex min-h-0 grow">
        <VerticalRuler />
        <div className="flex min-w-0 grow justify-center overflow-hidden pl-[9px]">
          <div className="flex w-[844px] shrink-0 flex-col">
            <HorizontalRuler />
            <Page />
          </div>
        </div>
        <ScrollBar />
        <RestrictPanel />
        <Rail />
      </main>
      <StatusBar />
      <Overlays />
    </div>
  );
}
